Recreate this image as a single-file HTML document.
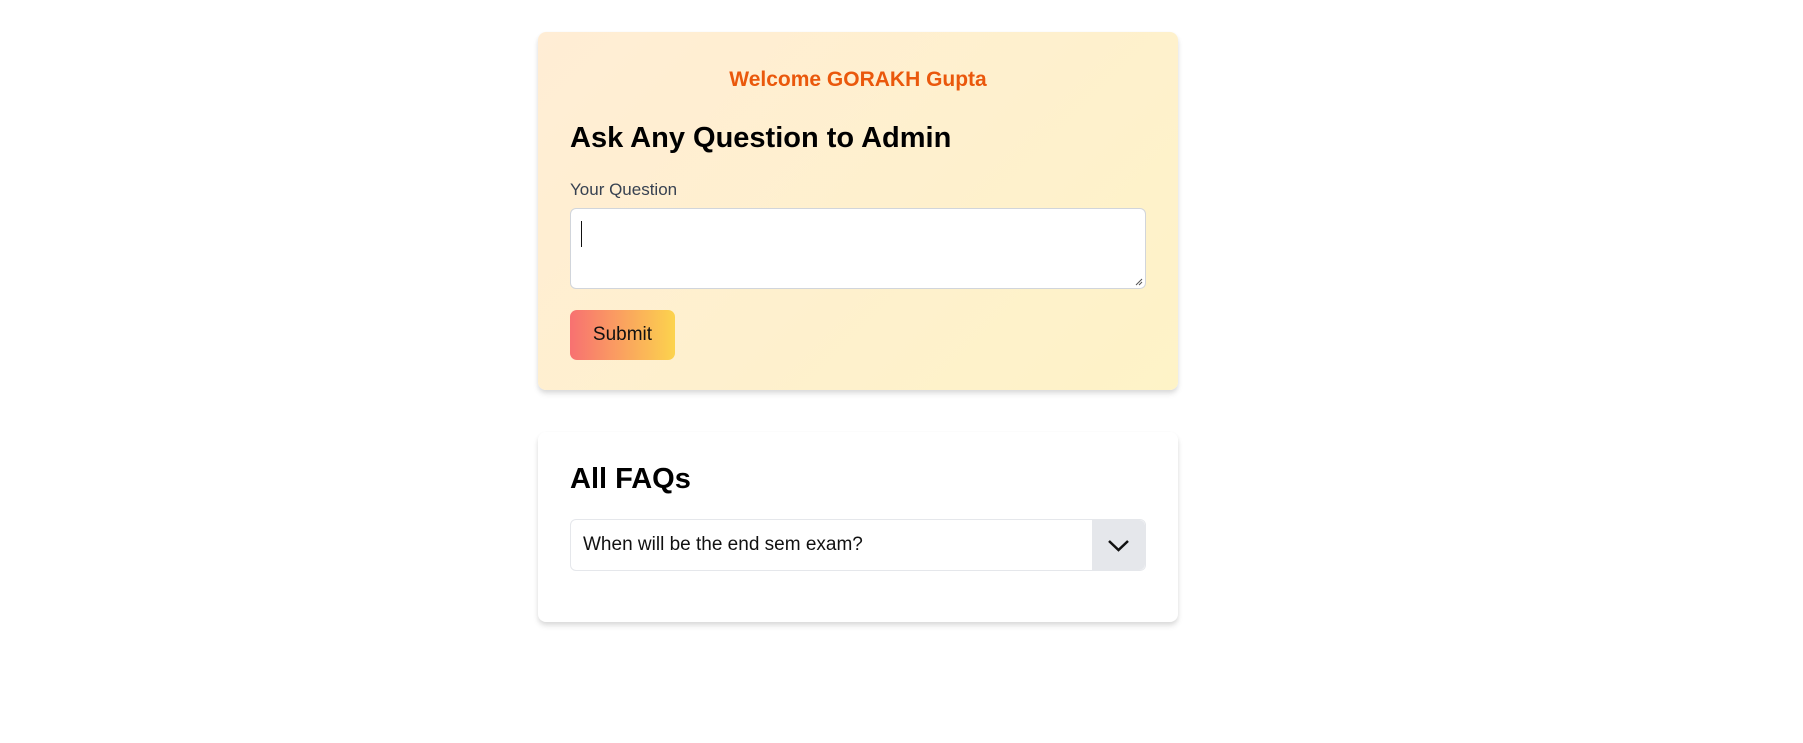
<!DOCTYPE html>
<html><head><meta charset="utf-8"><style>
body{margin:0;width:1803px;height:743px;background:#fff;font-family:"Liberation Sans",sans-serif;position:relative;overflow:hidden}
.card{position:absolute;left:538px;width:640px;border-radius:8px;box-shadow:0 4px 6px rgba(0,0,0,.1),0 2px 4px rgba(0,0,0,.06);box-sizing:border-box;padding:0 32px}
.c1{top:32px;height:358px;background:linear-gradient(135deg,#ffedd5,#fef3c7)}
.c2{top:432px;height:190px;background:#fff}
.welcome{position:absolute;left:0;right:0;text-align:center;color:#ea580c;font-weight:bold;font-size:21px}
h2{position:absolute;margin:0;left:32px;font-weight:bold;font-size:29px;color:#000}
.label{position:absolute;left:32px;font-size:17px;color:#374151}
.ta{position:absolute;top:176px;left:32px;width:576px;height:81px;background:#fff;border:1px solid #d1d5db;border-radius:6px;box-sizing:border-box}
.caret{position:absolute;left:10px;top:12px;width:1px;height:26px;background:#111}
.btn{position:absolute;top:278px;left:32px;width:105px;height:50px;border-radius:7px;background:linear-gradient(90deg,#f87171,#fcd34d);font-size:19px;text-align:center;line-height:50px;color:#111}
.sel{position:absolute;top:87px;left:32px;width:576px;height:52px;border:1px solid #e5e7eb;border-radius:6px;box-sizing:border-box;font-size:19px;line-height:50px;padding-left:12px;color:#111}
.chev{position:absolute;right:0;top:0;width:53px;height:50px;background:#e5e7eb;border-radius:0 6px 6px 0}
</style></head><body>
<div class="card c1">
<div class="welcome" style="top:36px">Welcome GORAKH Gupta</div>
<h2 style="top:90px">Ask Any Question to Admin</h2>
<div class="label" style="top:148px">Your Question</div>
<div class="ta"><div class="caret"></div>
<svg style="position:absolute;right:2px;bottom:2px" width="10" height="10"><path d="M9 3L3 9M9 6L6 9" stroke="#555" stroke-width="1"/></svg></div>
<div class="btn">Submit</div>
</div>
<div class="card c2">
<h2 style="top:31px">All FAQs</h2>
<div class="sel">When will be the end sem exam?<div class="chev"><svg width="53" height="50"><path d="M17 21l9.5 9 9.5-9" fill="none" stroke="#111" stroke-width="2.5"/></svg></div></div>
</div>
</body></html>
